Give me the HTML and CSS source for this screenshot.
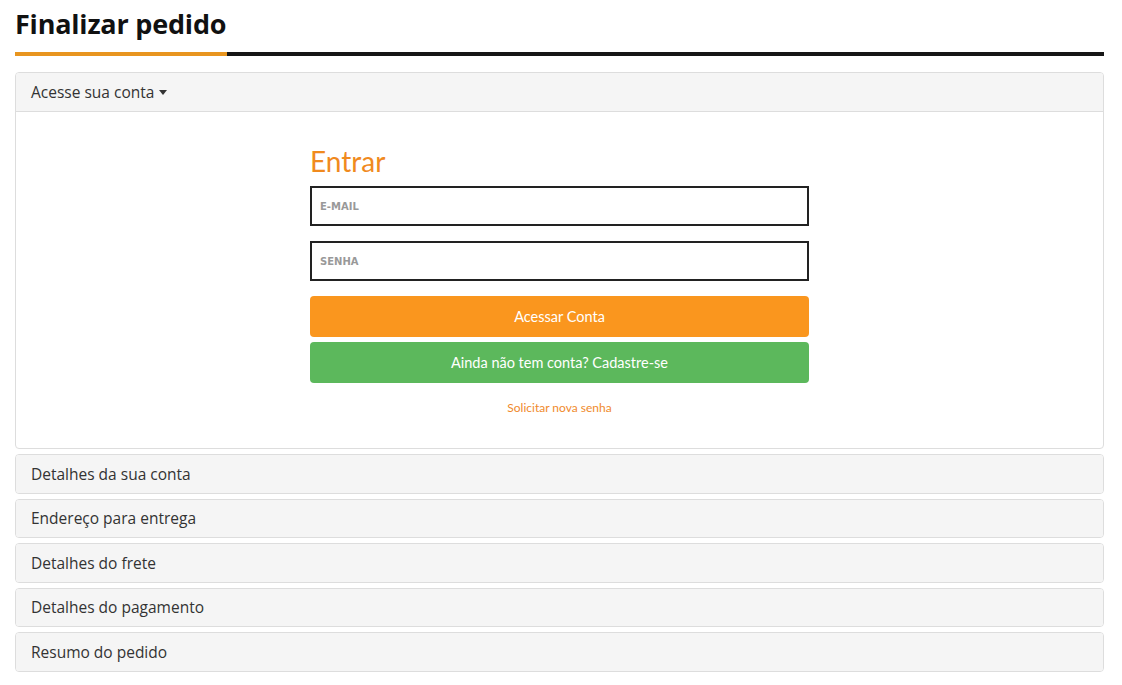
FILE: index.html
```html
<!DOCTYPE html>
<html lang="pt-BR">
<head>
<meta charset="utf-8">
<title>Finalizar pedido</title>
<link rel="stylesheet" href="styles.css">
</head>
<body>
<div class="page">
  <h1 class="title">Finalizar pedido</h1>
  <div class="title-rule"><span class="rule-accent"></span><span class="rule-rest"></span></div>

  <div class="panel">
    <div class="panel-head">Acesse sua conta <span class="caret"></span></div>
    <div class="panel-body">
      <form class="login">
        <h2 class="login-title">Entrar</h2>
        <input class="field" type="text" placeholder="E-MAIL">
        <input class="field" type="password" placeholder="SENHA">
        <button type="button" class="btn btn-orange">Acessar Conta</button>
        <button type="button" class="btn btn-green">Ainda não tem conta? Cadastre-se</button>
        <a class="forgot" href="#">Solicitar nova senha</a>
      </form>
    </div>
  </div>

  <div class="panel"><div class="panel-head solo">Detalhes da sua conta</div></div>
  <div class="panel"><div class="panel-head solo">Endereço para entrega</div></div>
  <div class="panel"><div class="panel-head solo">Detalhes do frete</div></div>
  <div class="panel"><div class="panel-head solo">Detalhes do pagamento</div></div>
  <div class="panel"><div class="panel-head solo">Resumo do pedido</div></div>
</div>
</body>
</html>
```
FILE: styles.css
```css
* { box-sizing: border-box; }
body {
  margin: 0;
  background: #fff;
  font-family: Lato, "Open Sans", sans-serif;
  color: #333;
}
.page {
  padding: 0 18px 0 15px;
  display: flex;
  flex-direction: column;
}
.title {
  margin: 7px 0 0;
  font-family: "Open Sans", Lato, sans-serif;
  font-weight: 700;
  font-size: 27px;
  line-height: 34px;
  color: #111;
  letter-spacing: -0.2px;
}
.title-rule {
  display: flex;
  height: 4px;
  margin-top: 11px;
  margin-bottom: 16px;
}
.rule-accent { width: 212px; background: #e8951f; }
.rule-rest { flex: 1; background: #161616; }
.panel {
  border: 1px solid #ddd;
  border-radius: 4px;
  margin-bottom: 5px;
  background: #fff;
}
.panel-head {
  background: #f5f5f5;
  height: 39px;
  padding: 0 15px;
  display: flex;
  align-items: center;
  font-family: "Open Sans", Lato, sans-serif;
  font-size: 15.5px;
  color: #333;
  border-bottom: 1px solid #ddd;
  border-radius: 3px 3px 0 0;
}
.panel-head.solo {
  border-bottom: none;
  height: 37.5px;
  border-radius: 3px;
}
.caret {
  display: inline-block;
  width: 0; height: 0;
  margin-left: 5px;
  border-left: 4px solid transparent;
  border-right: 4px solid transparent;
  border-top: 5px solid #333;
}
.panel-body {
  height: 336px;
  display: flex;
  justify-content: center;
  padding-top: 33px;
}
.login {
  width: 499px;
  display: flex;
  flex-direction: column;
}
.login-title {
  margin: 0 0 9px;
  font-weight: 400;
  font-size: 28px;
  line-height: 32px;
  color: #f08a1e;
}
.field {
  height: 40px;
  border: 2px solid #222;
  padding: 0 8px;
  font-family: "DejaVu Sans", sans-serif;
  font-size: 10px;
  font-weight: 700;
  margin: 0 0 15px;
  outline: none;
}
.field::placeholder { color: #999; }
.btn {
  height: 41px;
  border: none;
  border-radius: 4px;
  color: #fff;
  font-family: Lato, sans-serif;
  font-size: 14.5px;
  margin: 0 0 5px;
}
.btn-orange { background: #fa961e; }
.btn-green { background: #5cb85c; }
.forgot {
  margin-top: 12px;
  align-self: center;
  font-size: 12px;
  color: #f08a2c;
  text-decoration: none;
}
```
